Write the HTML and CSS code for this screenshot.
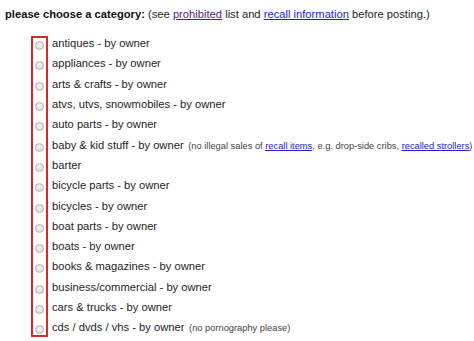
FILE: index.html
```html
<!DOCTYPE html>
<html>
<head>
<meta charset="utf-8">
<link rel="stylesheet" href="styles.css">
</head>
<body>
<div class="page">
  <p class="prompt"><b>please choose a category:</b> (see <a class="visited" href="#">prohibited</a> list and <a href="#">recall information</a> before posting.)</p>
  <div class="list">
    <div class="mark"></div>
    <label class="row"><span class="radio"></span><span class="text">antiques - by owner</span></label>
    <label class="row"><span class="radio"></span><span class="text">appliances - by owner</span></label>
    <label class="row"><span class="radio"></span><span class="text">arts &amp; crafts - by owner</span></label>
    <label class="row"><span class="radio"></span><span class="text">atvs, utvs, snowmobiles - by owner</span></label>
    <label class="row"><span class="radio"></span><span class="text">auto parts - by owner</span></label>
    <label class="row"><span class="radio"></span><span class="text">baby &amp; kid stuff - by owner <small class="note">(no illegal sales of <a href="#">recall items</a>, e.g. drop-side cribs, <a href="#">recalled strollers</a>)</small></span></label>
    <label class="row"><span class="radio"></span><span class="text">barter</span></label>
    <label class="row"><span class="radio"></span><span class="text">bicycle parts - by owner</span></label>
    <label class="row"><span class="radio"></span><span class="text">bicycles - by owner</span></label>
    <label class="row"><span class="radio"></span><span class="text">boat parts - by owner</span></label>
    <label class="row"><span class="radio"></span><span class="text">boats - by owner</span></label>
    <label class="row"><span class="radio"></span><span class="text">books &amp; magazines - by owner</span></label>
    <label class="row"><span class="radio"></span><span class="text">business/commercial - by owner</span></label>
    <label class="row"><span class="radio"></span><span class="text">cars &amp; trucks - by owner</span></label>
    <label class="row"><span class="radio"></span><span class="text">cds / dvds / vhs - by owner <small class="note">(no pornography please)</small></span></label>
  </div>
</div>
</body>
</html>
```
FILE: styles.css
```css
html, body {
  margin: 0;
  padding: 0;
  background: #ffffff;
}
.page {
  font-family: "Liberation Sans", Arial, sans-serif;
  font-size: 11.2px;
  color: #1e1e1e;
  padding: 7px 0 0 5px;
}
.prompt {
  margin: 0;
  line-height: 15px;
  white-space: nowrap;
}
.prompt b {
  color: #111111;
}
a {
  color: #2222cc;
  text-decoration: underline;
}
a.visited {
  color: #551a8b;
}
.list {
  position: relative;
  margin-top: 11px;
  padding-left: 30px;
  display: flex;
  flex-direction: column;
}
.row {
  display: flex;
  align-items: center;
  height: 20.3px;
  white-space: nowrap;
}
.text {
  white-space: nowrap;
}
.radio {
  width: 9px;
  height: 9px;
  border-radius: 50%;
  box-sizing: border-box;
  border: 1px solid #b4b4b4;
  background: radial-gradient(circle at 50% 40%, #f6f6f6 0%, #dedede 70%, #cfcfcf 100%);
  margin: 5px 8px 0 0;
  flex: none;
}
.note {
  font-size: 9.3px;
  color: #444444;
  margin-left: 1.5px;
}
.mark {
  position: absolute;
  left: 26px;
  top: 3px;
  width: 13px;
  height: 297px;
  border: 2px solid #d42a2a;
}
```
